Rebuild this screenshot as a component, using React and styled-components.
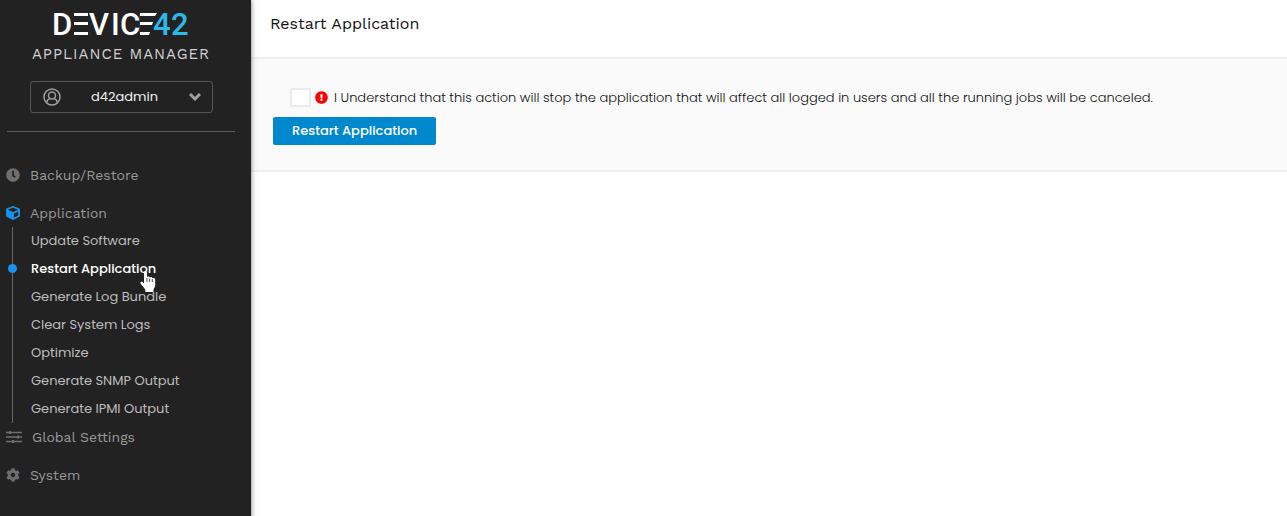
import React, { useState } from "react";
import styled, { createGlobalStyle } from "styled-components";
import { FaClock, FaCube, FaCog, FaExclamationCircle } from "react-icons/fa";

const GlobalStyle = createGlobalStyle`
  * { box-sizing: border-box; }
  body {
    margin: 0;
    background: #fff;
    font-family: Poppins, Inter, "Liberation Sans", sans-serif;
    font-size: 13px;
  }
  a { color: inherit; text-decoration: none; }
`;

const Page = styled.div`
  display: flex;
  min-height: 100vh;
`;

const Sidebar = styled.aside`
  flex: 0 0 251px;
  z-index: 1;
  background: #222;
  color: #999;
  box-shadow: 0 0 5px rgba(0, 0, 0, 0.55);
`;

const Brand = styled.header`
  display: flex;
  flex-direction: column;
  align-items: center;
  margin: 0 16px 0 7px;
  padding: 2px 0 18px;
  border-bottom: 1px solid #5c5c5c;
`;

const Logo = styled.svg`
  display: block;
  font-family: Roboto, sans-serif;
  font-size: 31px;
  font-weight: 500;
`;

const Product = styled.div`
  color: #d2d2d2;
  font-family: "Work Sans", "Noto Sans", sans-serif;
  font-size: 15px;
  line-height: 20px;
  letter-spacing: 1px;
  white-space: nowrap;
`;

const UserButton = styled.button`
  display: flex;
  align-items: center;
  justify-content: space-between;
  width: 183px;
  height: 32px;
  margin-top: 17px;
  padding: 0 11px 0 12px;
  border: 1px solid #555;
  border-radius: 3px;
  background: transparent;
  color: #f2f2f2;
  font: inherit;
`;

const Nav = styled.nav`
  padding: 30px 0 28px 6px;
`;

const Section = styled.a`
  display: flex;
  align-items: center;
  gap: 10px;
  height: 26px;
  margin-bottom: ${(p) => (p.$open ? "0" : "12px")};
  font-family: "Work Sans", "Noto Sans", sans-serif;
  font-size: 14px;
`;

const IconSlot = styled.span`
  display: flex;
  color: ${(p) => (p.$active ? "#1793ee" : "#6e6e6e")};
`;

const SubMenu = styled.ul`
  list-style: none;
  margin: 1px 0 1px 6px;
  padding: 0;
  border-left: 1px solid #666;
`;

const SubItem = styled.li`
  display: flex;
  align-items: center;
  position: relative;
  height: 28px;
  padding-left: 18px;
  color: ${(p) => (p.$active ? "#fff" : "#bdbdbd")};
  font-weight: ${(p) => (p.$active ? 500 : 400)};
`;

const Marker = styled.span`
  position: absolute;
  left: -5px;
  top: 9px;
  width: 9px;
  height: 9px;
  border-radius: 50%;
  background: #1793ee;
`;

const Pointer = styled.svg`
  position: absolute;
  left: 127px;
  top: 15px;
  z-index: 2;
  pointer-events: none;
`;

const Main = styled.main`
  flex: 1;
  min-width: 0;
`;

const Title = styled.h1`
  margin: 0;
  padding: 14px 19px 23px;
  color: #111;
  font-family: "Work Sans", "Noto Sans", sans-serif;
  font-size: 16px;
  font-weight: 400;
  line-height: 20px;
`;

const Panel = styled.form`
  padding: 28px 22px 25px;
  border-top: 2px solid #eee;
  border-bottom: 2px solid #eee;
  background: #fafafa;
`;

const Confirm = styled.label`
  display: flex;
  align-items: center;
  min-height: 20px;
  padding-left: 17px;
  color: #111;
  font-weight: 300;
  line-height: 18px;
`;

const ConfirmText = styled.span`
  padding-top: 2px;
`;

const Checkbox = styled.input`
  appearance: none;
  flex: none;
  width: 21px;
  height: 19px;
  margin: 0 4px 0 0;
  border: 2px solid #ebebeb;
  border-radius: 2px;
  background: #fff;
  &:checked { background: #0088ce; }
`;

const Warning = styled(FaExclamationCircle)`
  flex: none;
  margin-right: 6px;
  color: #f00;
`;

const PrimaryButton = styled.button`
  height: 28px;
  margin-top: 10px;
  padding: 0 19px;
  border: 0;
  border-radius: 2px;
  background: #0088ce;
  color: #fff;
  font: inherit;
  font-weight: 500;
`;

const BrandLogo = () => (
  <Logo width="136" height="42" viewBox="0 -6 136 42" role="img" aria-label="DEVICE42">
    <text y="27" fill="#fff" x="-1 19 36 58 67 85">DEVICE</text>
    <path d="M20 3h16v26h-16zM87 3h18v26h-18z" fill="#222" />
    <path d="M21 5h14v3H21zM21 14h14v3H21zM21 24h14v3H21zM87 5h17l-2 3H87zM87 14h13l-1 3H87zM87 24h10l-1 3H87z" fill="#fff" />
    <text y="27" fill="#2bb9ea" x="100 118">42</text>
  </Logo>
);

const UserIcon = () => (
  <svg width="18" height="18" viewBox="0 0 18 18" fill="none" stroke="#a0a0a0" strokeWidth="1.5" aria-hidden="true">
    <circle cx="9" cy="9" r="8" />
    <circle cx="9" cy="7.5" r="3.5" />
    <path d="M3.5 14.5c.5-2.300 1.800-3.500 3.300-4M14.500 14.500c-.5-2.300-1.800-3.500-3.300-4" />
  </svg>
);

const Chevron = () => (
  <svg width="12" height="8" viewBox="0 0 12 8" fill="none" stroke="#a0a0a0" strokeWidth="3" aria-hidden="true">
    <path d="M1 1l5 5 5-5" />
  </svg>
);

const SlidersIcon = () => (
  <svg width="16" height="12" viewBox="0 0 16 12" fill="none" stroke="currentColor" aria-hidden="true">
    <path d="M0 1.500h16M0 6h16M0 10.500h16" strokeWidth="1.600" />
    <path d="M4 0v3M12 4.500v3M7 9v3" strokeWidth="2" />
  </svg>
);

const HandPointer = () => (
  <Pointer width="18" height="24" viewBox="0 0 18 24" aria-hidden="true">
    <path
      d="M4 2.500C4 .4 7 .4 7 2.500V7c.5-1 2.500-.8 2.700.6.800-1 2.500-.6 2.600.7 1-.8 2.900-.2 2.900 1.300V15c0 2-1.400 3.300-1.700 4.500V22H5.300v-2.200C4.500 18 2.500 16.500.6 13.600-.2 12.200 1.300 11 2.500 12L4 13.500z"
      fill="#fff"
    />
    <path d="M7 8v4M9.700 8.500v3.500M12.300 9v3" stroke="#222" strokeWidth=".8" />
  </Pointer>
);

const applicationLinks = [
  "Update Software",
  "Restart Application",
  "Generate Log Bundle",
  "Clear System Logs",
  "Optimize",
  "Generate SNMP Output",
  "Generate IPMI Output",
];

export default function App() {
  const [confirmed, setConfirmed] = useState(false);
  return (
    <>
      <GlobalStyle />
      <Page>
        <Sidebar>
          <Brand>
            <BrandLogo />
            <Product>APPLIANCE MANAGER</Product>
            <UserButton type="button">
              <UserIcon />
              d42admin
              <Chevron />
            </UserButton>
          </Brand>
          <Nav>
            <Section href="#backup">
              <IconSlot><FaClock size={14} /></IconSlot>Backup/Restore
            </Section>
            <Section href="#application" $open>
              <IconSlot $active><FaCube size={14} /></IconSlot>Application
            </Section>
            <SubMenu>
              {applicationLinks.map((name) => {
                const active = name === "Restart Application";
                return (
                  <SubItem key={name} $active={active}>
                    {active && <Marker />}
                    <a href="#application">{name}</a>
                    {active && <HandPointer />}
                  </SubItem>
                );
              })}
            </SubMenu>
            <Section href="#settings">
              <IconSlot><SlidersIcon /></IconSlot>Global Settings
            </Section>
            <Section href="#system">
              <IconSlot><FaCog size={14} /></IconSlot>System
            </Section>
          </Nav>
        </Sidebar>
        <Main>
          <Title>Restart Application</Title>
          <Panel onSubmit={(e) => e.preventDefault()}>
            <Confirm>
              <Checkbox type="checkbox" checked={confirmed} onChange={(e) => setConfirmed(e.target.checked)} />
              <Warning size={13} />
              <ConfirmText>
                I Understand that this action will stop the application that will affect all logged in users and all the running jobs will be canceled.
              </ConfirmText>
            </Confirm>
            <PrimaryButton type="submit">Restart Application</PrimaryButton>
          </Panel>
        </Main>
      </Page>
    </>
  );
}
